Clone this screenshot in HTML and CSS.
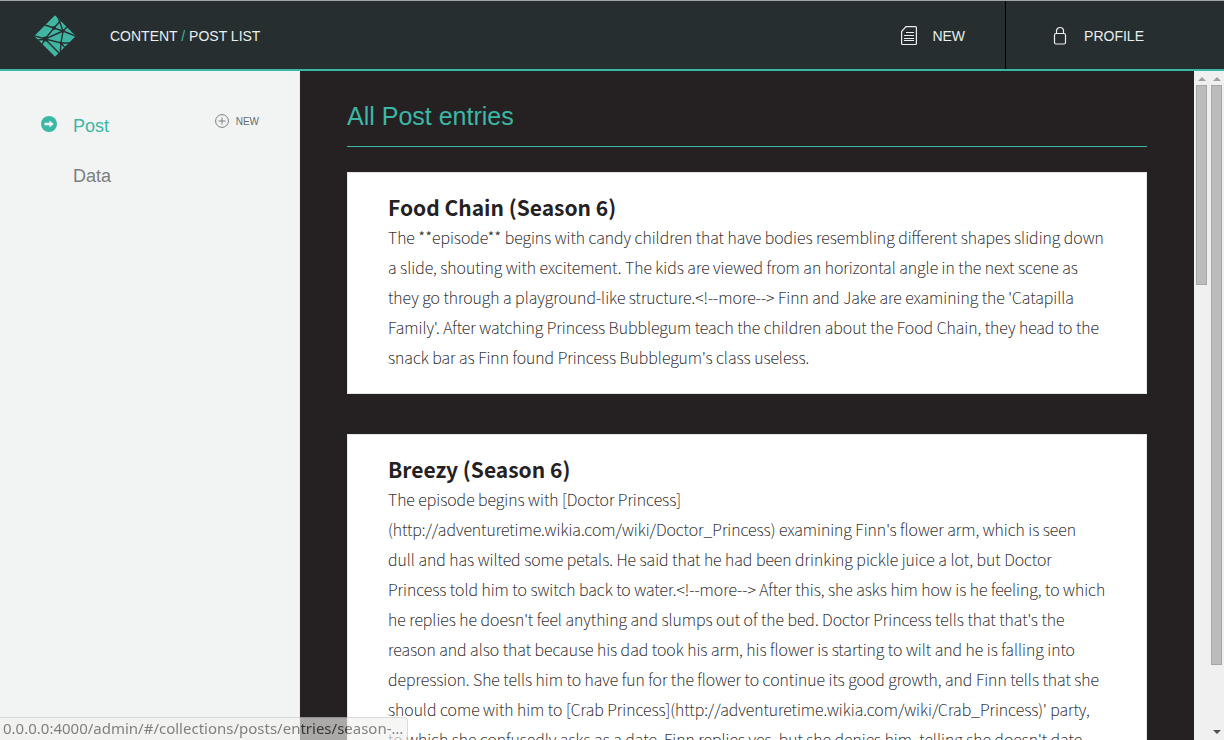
FILE: index.html
```html
<!DOCTYPE html>
<html lang="en">
<head>
<meta charset="utf-8">
<meta name="viewport" content="width=device-width, initial-scale=1">
<title>Post List</title>
<link rel="stylesheet" href="styles.css">
</head>
<body>
<header class="topbar">
  <a class="logo" href="#" aria-label="Home">
    <svg width="42" height="42" viewBox="0 0 42 42" aria-hidden="true">
      <defs><clipPath id="diamond"><path d="M21 0 42 21 21 42 0 21z"/></clipPath></defs>
      <g clip-path="url(#diamond)">
        <path class="logo-fill" d="M21 0 42 21 21 42 0 21z"/>
        <g class="logo-lines">
          <path d="M11 24 20 13 29 16 27 28 11 24 29 16M20 13 8 9M20 13 28 4M29 16 24 2M29 16 35 10M29 16 44 22M27 28 38 28M27 28 26 42M27 28 33 35M11 24-2 20M11 24-2 26M11 24 6 33M11 24 27 40"/>
        </g>
        <circle class="logo-node" cx="11" cy="24" r="2.6"/>
        <circle class="logo-node" cx="20" cy="13" r="2"/>
        <circle class="logo-node" cx="29" cy="16" r="1.6"/>
        <circle class="logo-node" cx="27" cy="28" r="1.4"/>
      </g>
    </svg>
  </a>
  <nav class="crumbs" aria-label="Breadcrumb"><a href="#">Content</a> <span class="slash">/</span> <a href="#">Post List</a></nav>
  <button class="top-action new-action" type="button">
    <svg width="16" height="20" viewBox="0 0 16 20" aria-hidden="true"><path d="M5 .6H14.500a1 1 0 0 1 .9 1V17.500a1 1 0 0 1-1 1H1.600a1 1 0 0 1-1-1V5.500zM5 6.500H13M3 9.500H13M3 12.500H13M3 14.500H13"/></svg>
    <span>New</span>
  </button>
  <button class="top-action profile-action" type="button">
    <svg width="14" height="20" viewBox="0 0 14 20" aria-hidden="true"><rect x="1.500" y="7.500" width="11" height="10.500" rx="1.500"/><path d="M3.500 7.500V5a3.500 3.500 0 0 1 7 0V7.500"/></svg>
    <span>Profile</span>
  </button>
</header>
<div class="workspace">
  <aside class="sidebar">
    <ul class="collections">
      <li class="collection">
        <svg class="arrow" width="16" height="20" viewBox="0 0 16 20" aria-hidden="true"><circle cx="8" cy="8" r="8"/><path d="M3.500 6.800H8.500V4.400L12.800 8 8.500 11.600V9.200H3.500z"/></svg>
        <a class="active" href="#">Post</a>
        <button class="add" type="button">
          <svg width="14" height="14" viewBox="0 0 14 14" aria-hidden="true"><circle cx="7" cy="7" r="6.400"/><path d="M7 3.500V10.500M3.500 7H10.500"/></svg>
          <span>New</span>
        </button>
      </li>
      <li class="collection"><span class="arrow-space"></span><a href="#">Data</a></li>
    </ul>
  </aside>
  <main class="entries">
    <h1>All Post entries</h1>
    <article class="card">
      <h2>Food Chain (Season 6)</h2>
      <p>The **episode** begins with candy children that have bodies resembling different shapes sliding down a slide, shouting with excitement. The kids are viewed from an horizontal angle in the next scene as they go through a playground-like structure.&lt;!--more--&gt; Finn and Jake are examining the 'Catapilla Family'. After watching Princess Bubblegum teach the children about the Food Chain, they head to the snack bar as Finn found Princess Bubblegum's class useless.</p>
    </article>
    <article class="card">
      <h2>Breezy (Season 6)</h2>
      <p>The episode begins with [Doctor Princess]<br>(http://adventuretime.wikia.com/wiki/Doctor_Princess) examining Finn's flower arm, which is seen dull and has wilted some petals. He said that he had been drinking pickle juice a lot, but Doctor Princess told him to switch back to water.&lt;!--more--&gt; After this, she asks him how is he feeling, to which he replies he doesn't feel anything and slumps out of the bed. Doctor Princess tells that that's the reason and also that because his dad took his arm, his flower is starting to wilt and he is falling into depression. She tells him to have fun for the flower to continue its good growth, and Finn tells that she should come with him to [Crab Princess](http://adventuretime.wikia.com/wiki/Crab_Princess)' party, to which she confusedly asks as a date. Finn replies yes, but she denies him, telling she doesn't date</p>
    </article>
  </main>
  <div class="scrollbar inner" aria-hidden="true"><span class="up"></span><span class="thumb"></span></div>
  <div class="scrollbar outer" aria-hidden="true"><span class="up"></span><span class="thumb"></span><span class="down"></span></div>
</div>
<div class="status">0.0.0.0:4000/admin/#/collections/posts/entries/season-…</div>
</body>
</html>
```
FILE: styles.css
```css
* { box-sizing: border-box; }
body {
  margin: 0;
  height: 100vh;
  display: flex;
  flex-direction: column;
  overflow: hidden;
  background: #252122;
  font-family: "Liberation Sans", Arial, sans-serif;
}
a { color: inherit; text-decoration: none; }
button { border: 0; padding: 0; background: none; font: inherit; color: inherit; text-transform: uppercase; }
h1, h2, p, ul { margin: 0; padding: 0; }

.topbar {
  flex: none;
  display: flex;
  align-items: stretch;
  height: 71px;
  border-top: 1px solid #a3a5a5;
  border-bottom: 2px solid #3ab7a5;
  background: #272e30;
  color: #e9eeee;
  font-size: 14px;
}
.logo { display: flex; align-items: center; padding: 2px 34px 0; }
.logo-fill { fill: #40b5a2; }
.logo-lines { fill: none; stroke: #272e30; stroke-width: 1.4; }
.logo-node { fill: #272e30; }
.crumbs { flex: 1; align-self: center; padding-top: 2px; text-transform: uppercase; }
.slash { color: #3ab7a5; }
.top-action { display: flex; align-items: center; padding-top: 1px; }
.top-action svg { fill: none; stroke: #e9eeee; stroke-width: 1.2; }
.new-action { gap: 15px; padding-right: 40px; }
.profile-action { gap: 17px; padding-left: 47px; padding-right: 80px; border-left: 1px solid #000; }

.workspace { flex: 1; min-height: 0; display: flex; }
.sidebar { flex: none; width: 300px; padding: 30px 40px 30px 41px; background: #f2f4f4; border-right: 1px solid #e9ebeb; }
.collections { list-style: none; }
.collection { display: flex; align-items: center; height: 50px; color: #7b7f80; font-size: 18px; }
.arrow { width: 16px; margin-right: 16px; fill: #3ab7a5; }
.arrow path { fill: #f2f4f4; }
.arrow-space { width: 32px; }
.active { color: #3ab7a5; }
.add { display: flex; align-items: center; gap: 7px; margin-left: auto; padding-bottom: 10px; font-size: 10px; color: #666b6c; }
.add svg { fill: none; stroke: #7b7f80; }

.entries { flex: 1; min-width: 0; padding: 26px 47px; overflow: hidden; }
h1 {
  padding-bottom: 10px;
  margin-bottom: 25px;
  border-bottom: 1px solid #3ab7a5;
  color: #3ab7a5;
  font-size: 25px;
  line-height: 39px;
  font-weight: 400;
}
.card {
  margin-bottom: 40px;
  padding: 19px 40px 21px;
  background: #fff;
  border: 1px solid #e4e6e6;
  font-family: "Noto Sans CJK JP", "Noto Sans", sans-serif;
  line-height: 30px;
}
h2 { color: #252122; font-size: 21px; font-weight: 700; }
.card p { color: #252122; font-size: 16px; font-weight: 100; text-shadow: 0 0 0 #77777a; }

.scrollbar { flex: none; width: 15px; padding: 6px 2px; display: flex; flex-direction: column; background: #f0f0f0; }
.up, .down { flex: none; align-self: center; border: 4px solid transparent; border-top-width: 0; border-bottom: 4px solid #a0a0a0; }
.down { border-top: 4px solid #505050; border-bottom-width: 0; }
.thumb { margin-top: 4px; background: #bcbcbc; border: 1px solid #a6a6a6; }
.inner .thumb { height: 30.5%; }
.outer .thumb { flex: 1; margin-bottom: 65px; }

.status {
  position: fixed;
  left: 0;
  bottom: 0;
  height: 23px;
  padding: 0 4px 0 3px;
  background: #f2f1f0;
  border-top: 1px solid #c8c8c8;
  border-right: 1px solid #c8c8c8;
  border-top-right-radius: 4px;
  opacity: .66;
  color: #444;
  font-family: "Noto Sans", sans-serif;
  font-size: 15px;
  line-height: 20px;
}
```
